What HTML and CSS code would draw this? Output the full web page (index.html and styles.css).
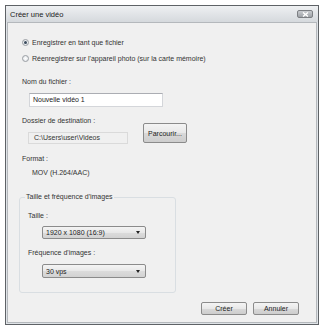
FILE: index.html
```html
<!DOCTYPE html>
<html lang="fr">
<head>
<meta charset="utf-8">
<title>Créer une vidéo</title>
<link rel="stylesheet" href="styles.css">
</head>
<body>
<div class="window">
  <div class="titlebar">
    <span class="title">Créer une vidéo</span>
    <span class="close"><svg width="7" height="5" viewBox="0 0 7 5"><path d="M1 0.5 L6 4.5 M6 0.5 L1 4.5" stroke="#fff" stroke-width="1.4"/></svg></span>
  </div>
  <div class="content">
    <div class="radio-row r1"><span class="radio checked"></span><span>Enregistrer en tant que fichier</span></div>
    <div class="radio-row r2"><span class="radio"></span><span>Réenregistrer sur l'appareil photo (sur la carte mémoire)</span></div>
    <div class="label l-nom">Nom du fichier :</div>
    <div class="input">Nouvelle vidéo 1</div>
    <div class="dest-row">
      <div class="dest-col">
        <div class="label">Dossier de destination :</div>
        <div class="readonly">C:\Users\user\Videos</div>
      </div>
      <div class="btn browse">Parcourir...</div>
    </div>
    <div class="label l-format">Format :</div>
    <div class="label value">MOV (H.264/AAC)</div>
    <fieldset class="group">
      <legend>Taille et fréquence d'images</legend>
      <div class="label g-taille">Taille :</div>
      <div class="select s1"><span>1920 x 1080 (16:9)</span><span class="arrow"></span></div>
      <div class="label g-freq">Fréquence d'images :</div>
      <div class="select s2"><span>30 vps</span><span class="arrow"></span></div>
    </fieldset>
    <div class="actions">
      <div class="btn act">Créer</div>
      <div class="btn act">Annuler</div>
    </div>
  </div>
</div>
</body>
</html>
```
FILE: styles.css
```css
* { box-sizing: border-box; }
html, body { margin: 0; padding: 0; background: #fff; }
body {
  font-family: "Liberation Sans", Arial, sans-serif;
  font-size: 7px;
  color: #333;
}
.window {
  margin: 5px 0 0 5px;
  width: 314px;
  height: 320px;
  border: 1px solid #5e6266;
  background: #dfe3e7;
  display: flex;
  flex-direction: column;
}
.titlebar {
  height: 16px;
  display: flex;
  align-items: center;
  justify-content: space-between;
  padding: 0 5px 0 4px;
  background: linear-gradient(#eef0f2, #d5d9dd);
  color: #222;
  font-size: 7.5px;
}
.close {
  width: 16px;
  height: 8px;
  border: 1px solid #7c7f83;
  border-radius: 2px;
  background: linear-gradient(#c9ccd0, #9da1a6);
  display: flex;
  align-items: center;
  justify-content: center;
}
.close svg { display: block; }
.content {
  flex: 1;
  margin: 0 1px 1px 1px;
  background: #f0f0f0;
  border: 1px solid #b4b8bc;
  padding: 0 0 0 14px;
  display: flex;
  flex-direction: column;
  align-items: flex-start;
}
.radio-row {
  height: 10px;
  display: flex;
  align-items: center;
  gap: 3px;
}
.r1 { margin-top: 14px; }
.r2 { margin-top: 6px; }
.radio {
  width: 7px;
  height: 7px;
  border-radius: 50%;
  border: 1px solid #9a9ea3;
  background: radial-gradient(#fff, #dde1e5);
  display: flex;
  align-items: center;
  justify-content: center;
}
.radio.checked::after {
  content: "";
  width: 3px;
  height: 3px;
  border-radius: 50%;
  background: #3a4a5c;
}
.label { height: 10px; line-height: 10px; white-space: nowrap; }
.l-nom { margin-top: 14px; }
.input {
  margin: 6px 0 0 7px;
  width: 134px;
  height: 14px;
  line-height: 12px;
  padding-left: 3px;
  background: #fff;
  border: 1px solid #d4d6da;
  border-top-color: #abadb3;
  color: #222;
}
.dest-row {
  margin-top: 9px;
  display: flex;
  align-items: flex-start;
}
.dest-col { display: flex; flex-direction: column; }
.readonly {
  margin: 6px 0 0 6px;
  width: 100px;
  height: 12px;
  line-height: 10px;
  padding-left: 5px;
  border: 1px solid #dadada;
  background: #f0f0f0;
}
.btn {
  border: 1px solid #8b8b8b;
  border-radius: 2px;
  background: linear-gradient(#f4f4f4 0%, #e8e8e8 50%, #d9d9d9 51%, #cdcdcd 100%);
  display: flex;
  align-items: center;
  justify-content: center;
  color: #222;
}
.browse {
  margin: 7px 0 0 15px;
  width: 44px;
  height: 20px;
}
.l-format { margin-top: 10px; }
.value { margin: 4px 0 0 10px; }
.group {
  margin: 14px 0 0 -3px;
  width: 157px;
  padding: 0 0 14px 8px;
  border: 1px solid #d9dee2;
  border-radius: 3px;
  min-width: 0;
}
.group legend {
  padding: 0 1px;
  margin-left: -3px;
  height: 10px;
  line-height: 10px;
}
.g-taille { margin-top: 9px; }
.select {
  margin: 5px 0 0 14px;
  width: 104px;
  height: 13px;
  padding: 0 5px 0 3px;
  border: 1px solid #8b8b8b;
  border-radius: 2px;
  background: linear-gradient(#f4f4f4 0%, #e8e8e8 50%, #dcdcdc 51%, #d2d2d2 100%);
  display: flex;
  align-items: center;
  justify-content: space-between;
  color: #222;
}
.s2 { margin-top: 6px; height: 14px; }
.g-freq { margin-top: 9px; }
.arrow {
  width: 0;
  height: 0;
  border-left: 2.5px solid transparent;
  border-right: 2.5px solid transparent;
  border-top: 3px solid #222;
}
.actions {
  margin: 9px 0 0 179px;
  display: flex;
  gap: 6px;
}
.act {
  width: 46px;
  height: 13px;
}
```
